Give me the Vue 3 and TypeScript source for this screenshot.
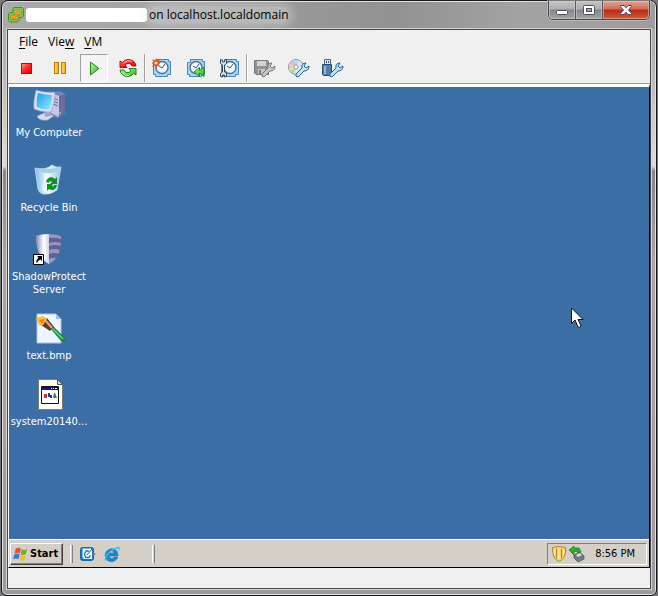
<script setup lang="ts">
import { ref } from 'vue'

interface MenuEntry {
  key: string
  rest: string
  before?: string
}

const menus: MenuEntry[] = [
  { key: 'F', rest: 'ile' },
  { before: 'Vie', key: 'w', rest: '' },
  { key: 'V', rest: 'M' },
]

const running = ref(true)
const clock = ref('8:56 PM')
</script>

<template>
  <div class="screen">
    <div class="window">
      <header class="titlebar">
        <svg class="app-icon" viewBox="0 0 16 16" aria-hidden="true">
          <path d="M6 .500h8l1.500 1.500v7L14 10.500h-3v3L9.500 15H2L.500 13.500V7L2 5.500h3V2z" fill="#8cc63f" stroke="#4c8a1a" />
          <path d="M7 3h6v5H9v4.500H3V8h4z" fill="#e4e8d4" stroke="#5e9821" stroke-width=".8" />
          <path d="M8.500 4H12v3.500H9v2H7.500V12H4V8.500h3v-2h1.500z" fill="#f7a21f" stroke="#c87a14" stroke-width=".6" />
        </svg>
        <span class="machine"></span>
        <span class="title">on localhost.localdomain</span>
        <div class="caption-buttons">
          <button type="button" class="cap min" aria-label="Minimize">
            <svg width="14" height="12" viewBox="0 0 14 12"><rect x="1.500" y="6.500" width="11" height="4" rx="1" fill="#fff" stroke="#4c4e60" /></svg>
          </button>
          <button type="button" class="cap max" aria-label="Maximize">
            <svg width="14" height="12" viewBox="0 0 14 12"><rect x="1.500" y="1.500" width="11" height="9" rx="1" fill="#fff" stroke="#4c4e60" /><rect x="4.500" y="4.500" width="5" height="3" fill="#a5a5aa" stroke="#4c4e60" /></svg>
          </button>
          <button type="button" class="cap close" aria-label="Close">
            <svg width="14" height="12" viewBox="0 0 14 12"><path d="M1.500 1.500h3.500l2 2.300 2-2.300h3.500v1L9.500 6l3 3.500v1H9l-2-2.300-2 2.300H1.500v-1l3-3.500-3-3.500z" fill="#fff" stroke="#53465c" /></svg>
          </button>
        </div>
      </header>

      <main class="client">
        <nav class="menubar">
          <button v-for="m in menus" :key="m.key" type="button" class="menu">{{ m.before }}<u>{{ m.key }}</u>{{ m.rest }}</button>
        </nav>

        <div class="toolbar" role="toolbar" aria-label="Virtual machine">
          <div class="group">
            <button type="button" class="tool" aria-label="Power off">
              <svg viewBox="0 0 20 20"><rect x="5.500" y="5.500" width="10" height="10" fill="url(#red)" stroke="#b50c0c" /></svg>
            </button>
            <button type="button" class="tool" aria-label="Suspend">
              <svg viewBox="0 0 20 20"><rect x="4.500" y="4.500" width="4" height="11" fill="url(#amber)" stroke="#bb7a00" /><rect x="11.500" y="4.500" width="4" height="11" fill="url(#amber)" stroke="#bb7a00" /></svg>
            </button>
            <button type="button" class="tool" :class="{ pressed: running }" aria-label="Power on">
              <svg viewBox="0 0 20 20"><path d="M6.500 4v13l8.500-6.500z" fill="url(#green)" stroke="#26841b" /></svg>
            </button>
            <button type="button" class="tool" aria-label="Reset">
              <svg viewBox="0 0 20 20">
                <path d="M18 8C17 1 8-.500 4.500 4.500L2 3v6.500h7L7 7c2-2.500 6-2 7 1z" fill="url(#red)" stroke="#a41212" />
                <path d="M2 12c1 7 10 8.500 13.500 3.500L18 17v-6.500h-7l2 2.500c-2 2.500-6 2-7-1z" fill="url(#green)" stroke="#247b1d" />
                <path d="M6 5q4-4 8-1" fill="none" stroke="#ffb3a8" /><path d="M4 14q2 4 7 3.500" fill="none" stroke="#c8f7b4" />
              </svg>
            </button>
          </div>
          <span class="separator"></span>
          <div class="group">
            <button type="button" class="tool" aria-label="Take snapshot">
              <svg viewBox="0 0 20 20">
                <use href="#clock" />
                <path d="M4 0l1 2.500L8 1 6.700 4 9 5 6.500 6 8 9 5 7.500 4 10 3 7.500 0 9l1.300-3L-.500 5l2-1L0 1l3 1.500z" fill="#e84b22" />
                <circle cx="4" cy="5" r="1.600" fill="#ffe38a" />
              </svg>
            </button>
            <button type="button" class="tool" aria-label="Revert to snapshot">
              <svg viewBox="0 0 20 20">
                <use href="#clock" />
                <path d="M13.500 9.500v3l4.500-3.500v9.500l-4.500-3.500v3.500L8 14z" fill="url(#green)" stroke="#23851a" />
              </svg>
            </button>
            <button type="button" class="tool" aria-label="Manage snapshots">
              <svg viewBox="0 0 20 20">
                <use href="#clock" />
                <path d="M.500 1.500v4L2.500 7v7L.500 15.500v3l2 .500v-2h2v2l2-.500v-3l-2-1.500V7l2-1.500v-4l-2 .500v2h-2V2z" fill="#d8e8f3" stroke="#33475b" />
              </svg>
            </button>
          </div>
          <span class="separator"></span>
          <div class="group">
            <button type="button" class="tool" aria-label="Floppy drive" disabled>
              <svg viewBox="0 0 20 20">
                <path d="M.500 2.500h13l1 1v13H2l-1.500-1.500z" fill="#929292" stroke="#777" />
                <path d="M3 3h9v5H3z" fill="#d2d2d2" /><path d="M4 11h7v5H4z" fill="#c7c7c7" /><path d="M5 12h2v4H5z" fill="#777" />
                <use href="#wrench" fill="#c5c5c5" stroke="#777" />
              </svg>
            </button>
            <button type="button" class="tool" aria-label="CD/DVD drive">
              <svg viewBox="0 0 20 20">
                <circle cx="8" cy="9" r="7.500" fill="#dce4ec" stroke="#8496a8" />
                <path d="M8 9L1 6q2-4 5-4z" fill="#d9b8e8" /><path d="M8 9L1 7v5z" fill="#f3d382" /><path d="M8 9L6 2h5z" fill="#a9dde9" /><path d="M8 9l-6 4 4 3z" fill="#a8dea0" />
                <circle cx="8" cy="9" r="2" fill="#fff" stroke="#8a9eb0" />
                <use href="#wrench" fill="#bde3f5" stroke="#285f8b" />
              </svg>
            </button>
            <button type="button" class="tool" aria-label="USB device">
              <svg viewBox="0 0 20 20">
                <path d="M2.500 1.500h6v5h-6z" fill="#dce6ef" stroke="#53677b" /><path d="M4 3h1v2H4zm2 0h1v2H6z" fill="#425670" />
                <path d="M.500 6.500h9v10l-1 1h-7l-1-1z" fill="#527ea8" stroke="#254b71" /><path d="M2 8h2v8H2z" fill="#92b9d6" />
                <use href="#wrench" fill="#bde3f5" stroke="#285f8b" />
              </svg>
            </button>
          </div>
        </div>

        <section class="console">
          <div class="desktop">
            <button type="button" class="shortcut">
              <svg viewBox="0 0 32 32">
                <path d="M18 3l9-2 5 3v20l-8 4-7-4z" fill="#8184b5" />
                <path d="M18 3l8 3v21l-8-4z" fill="#c4c5e7" /><path d="M26 6l6-2v20l-6 3z" fill="#6b6ca1" />
                <path d="M20 8l5 2m-5 1l5 2m-5 1l5 2" stroke="#696b9f" fill="none" /><circle cx="27" cy="23" r="1" fill="#61ee73" />
                <path d="M4 26l9-4 8 4-6 4c-5 1-10 0-11-4z" fill="#d9d9ef" stroke="#8589b5" stroke-width=".7" />
                <path d="M11 22l6-1 1 5-6 1z" fill="#a1a4cd" />
                <path d="M3 0q9 3 19 2 0 11-4 20-9 1-17-3Q0 12 3 0z" fill="#d6dff4" stroke="#7d94c5" stroke-width=".6" />
                <path d="M5 3q7 2 14 2 0 8-3 14.500-6 .500-12-2.500Q3 11 5 3z" fill="url(#screen)" />
              </svg>
              <span class="label">My Computer</span>
            </button>
            <button type="button" class="shortcut">
              <svg viewBox="0 0 32 32">
                <path d="M2 3q10 3 17-3 4 3 9 2l-4 23q-6 5-14 4-4-1-5-5z" fill="url(#bin)" stroke="#c3e2f5" stroke-width=".8" />
                <path d="M2 3q4 1 9 0 7 2 17-1-5 7-13 6Q7 8 2 3z" fill="#a8cfe9" /><path d="M11 9l4-1-1 18-5 1z" fill="#fff" opacity=".45" />
                <path d="M13 17c1-5 6-6 9-3l2-2v7h-7l2-2c-2-2-3 0-3 1zM24 20c-1 5-5 6-8 4l-2 2v-7h6l-1 2c1 1 2 0 2-1z" fill="#139022" />
              </svg>
              <span class="label">Recycle Bin</span>
            </button>
            <button type="button" class="shortcut">
              <svg viewBox="0 0 32 32">
                <path d="M3 2q13-4 25 0 1 22-12 28Q3 23 3 2z" fill="#9497c2" />
                <path d="M3 2q6-2 13-2v30Q3 23 3 2z" fill="url(#silver)" />
                <path d="M16 4q6-1 12 1v4q-6-2-12 0zm0 8q6-2 12 0l-1 4q-6-2-11 0zm0 8q5-2 10 0l-3 4q-3-1-7 1z" fill="#625f96" />
                <path d="M.500 20.500h10v10H.500z" fill="#fff" stroke="#000" />
                <path d="M4 22h5v5L7.500 25.500Q5 26 4 29 2 27 5.500 23.500z" fill="#000" />
              </svg>
              <span class="label">ShadowProtect Server</span>
            </button>
            <button type="button" class="shortcut">
              <svg viewBox="0 0 32 32">
                <path d="M4 1h19l5 5v24H4z" fill="#edf5ff" stroke="#a9c7ed" /><path d="M23 1v5h5z" fill="#9fbce6" />
                <path d="M17 15l3-2 13 13-1 3-4-1z" fill="#168744" /><path d="M19 15l11 11" stroke="#71d27e" stroke-width="1.500" />
                <path d="M10 8l4-3 7 9-4 4-9-6z" fill="#583c31" /><path d="M12 7l7 8" stroke="#f0a36e" stroke-width="2" />
                <path d="M3 5l7-2 4 3-4 6-3 1-2-3z" fill="#fac32e" /><path d="M6 7l6-1-3 5z" fill="#f17d22" />
              </svg>
              <span class="label">text.bmp</span>
            </button>
            <button type="button" class="shortcut">
              <svg viewBox="0 0 32 32">
                <path d="M5.500.500h19l5 5v25h-24z" fill="#fffef4" stroke="#777c7d" /><path d="M24.500.500v5h5z" fill="#d9d9d9" stroke="#55595b" />
                <path d="M8.500 7.500h17v17h-17z" fill="#fff" stroke="#111" /><path d="M9 8h16v3H9z" fill="#07178a" />
                <path d="M18 9.500h1m1 0h1m1 0h2" stroke="#fff" />
                <path d="M11 15h3v4h-3z" fill="#d22c2c" /><path d="M15 14h2v2h2v3h-2v-1h-2z" fill="#193db1" /><path d="M21 14h1l2 5h-4z" fill="#1b8c50" />
              </svg>
              <span class="label">system20140...</span>
            </button>
          </div>

          <footer class="taskbar">
            <button type="button" class="start">
              <svg viewBox="0 0 18 16" aria-hidden="true">
                <path d="M3 2q3-2 6 0L7.500 7.500q-3-2-6 0z" fill="#e75324" /><path d="M10 2.500q3 2 6 0L14.500 8q-3 2-6 0z" fill="#70ad32" />
                <path d="M1.500 8.500q3-2 6 0L6 14q-3-2-6 0z" fill="#3b77dc" /><path d="M8.500 9q3 2 6 0L13 14.500q-3 2-6 0z" fill="#f4bd22" />
              </svg>
              Start
            </button>
            <span class="grip"></span>
            <div class="quick">
              <button type="button" aria-label="Show Desktop">
                <svg viewBox="0 0 16 16"><rect x=".500" y="1.500" width="13" height="13" rx="2" fill="#1778c4" stroke="#1269ad" /><path d="M2.500 2.500H11l1 2v8.500H4L2.500 11z" fill="#f2fbff" /><path d="M9 5H6L4.500 8l1 3.500H9l1.500-2" fill="none" stroke="#1879be" stroke-width="1.300" /><path d="M7 9l5-6" stroke="#1c5c97" /><path d="M13 6l3 2-3 2z" fill="#e05527" /></svg>
              </button>
              <button type="button" aria-label="Internet Explorer">
                <svg viewBox="0 0 16 16"><path d="M14 10H5c1 3 4 3 5 1h4c-2 5-8 6-11 3-5-6 1-13 7-11 3 1 4 4 4 7zM5 7h5C9 4 6 4 5 7z" fill="#168ad4" stroke="#0870b8" stroke-width=".5" /><path d="M2 15c-4-1 2-11 11-14 4-1 3 2 1 5 1-3 0-4-3-3C5 6 0 14 3 13z" fill="#55baf0" /></svg>
              </button>
            </div>
            <span class="grip"></span>
            <div class="tray">
              <svg viewBox="0 0 16 16" role="img" aria-label="ShadowProtect"><path d="M1.500 1.500q6-2 13 0 1 11-6.500 14-7-3-6.500-14z" fill="#f6cf70" stroke="#bf841e" /><path d="M5.500 3v9M10.500 3v9" stroke="#b9801e" /><path d="M3.500 3v6M8 3v10M12.500 3v6" stroke="#fff0b4" /></svg>
              <svg viewBox="0 0 16 16" role="img" aria-label="Safely remove hardware"><path d="M5 9l6-3 4 4v3l-6 3-4-4z" fill="#737b87" stroke="#454c58" stroke-width=".7" /><path d="M7 9l4-2 2 2-4 2z" fill="#d8dee5" /><path d="M0 4l5-4v2h5l2 4-3 1-1-2-3 1v3z" fill="#2eac36" stroke="#16731e" stroke-width=".7" /></svg>
              <time>{{ clock }}</time>
            </div>
          </footer>

          <svg class="pointer" viewBox="0 0 12 21" aria-hidden="true">
            <path d="M.500 1v15.500L4 13l3 7q2 1 3-1l-3-6.500h5z" fill="#fff" stroke="#000" stroke-width=".9" />
          </svg>
        </section>
        <div class="status"></div>
      </main>
    </div>

    <svg class="defs" width="0" height="0" aria-hidden="true">
      <defs>
        <linearGradient id="red" x2="1" y2="1"><stop stop-color="#ff9a8c" /><stop offset=".5" stop-color="#f22" /><stop offset="1" stop-color="#d90000" /></linearGradient>
        <linearGradient id="amber" x2="1"><stop stop-color="#ffe36c" /><stop offset="1" stop-color="#ff9f00" /></linearGradient>
        <linearGradient id="green" x2="1" y2="1"><stop stop-color="#bdf5a2" /><stop offset="1" stop-color="#24b916" /></linearGradient>
        <linearGradient id="screen" x2="1" y2="1"><stop stop-color="#1b9dec" /><stop offset="1" stop-color="#95eaff" /></linearGradient>
        <linearGradient id="bin" x2="1"><stop stop-color="#80bce8" /><stop offset=".5" stop-color="#f3fbff" /><stop offset="1" stop-color="#91c5e8" /></linearGradient>
        <linearGradient id="silver" x2="1"><stop stop-color="#8788b5" /><stop offset=".6" stop-color="#fff" /><stop offset="1" stop-color="#d0d1e8" /></linearGradient>
        <g id="clock">
          <path d="M4.500 1.500h12v2h2v13h-3v2h-12v-2h-2v-12h3z" fill="#a6d3f0" stroke="#4388bf" />
          <circle cx="10" cy="9.500" r="6" fill="#edf7ff" stroke="#53718c" stroke-width="1.400" />
          <path d="M10 10l3-4m-3 4L7 8" stroke="#345875" fill="none" />
        </g>
        <path id="wrench" d="M8 16l6-6q-1-5 4-5l-2 3 2 2 3-2q0 5-5 5l-6 6q-3 0-2-3z" />
      </defs>
    </svg>
  </div>
</template>

<style>
body {
  margin: 0;
  background: #77777a;
}
</style>

<style scoped>
* {
  box-sizing: border-box;
}

button {
  padding: 0;
  border: 0;
  background: none;
  color: inherit;
  font: inherit;
}

svg {
  display: block;
  flex: none;
  overflow: visible;
}

.screen {
  display: flex;
  min-height: 100vh;
  padding: 0 1px;
}

.window {
  display: flex;
  flex: 1;
  flex-direction: column;
  padding: 0 5px 6px;
  border: 1px solid #17171b;
  border-radius: 7px 7px 6px 6px;
  background: linear-gradient(#a9a5a5 0, #b5b2b2 60px, #dedcdc 165px, #87858a 170px, #aaa5a6 260px, #9f9b9c 100%);
  box-shadow: inset 0 0 0 1px #e2e2e2;
}

.titlebar {
  display: flex;
  align-items: center;
  height: 27px;
  margin: 1px -4px 0;
  padding: 0 0 1px 5px;
  border-radius: 5px 5px 0 0;
  background: linear-gradient(90deg, #aaa 0, #aaa7a7 15%, #989898 45%, #929292 60%, #a3a3a3 80%, #9c9c9c 100%);
  font: 12px/16px "Open Sans", "Noto Sans", sans-serif;
  color: #000;
}

.app-icon {
  width: 16px;
  height: 16px;
}

.machine {
  width: 121px;
  height: 14px;
  margin: 0 2px;
  border-radius: 3px;
  background: #fff;
}

.title {
  border-radius: 8px;
  background: rgba(225, 225, 225, 0.4);
  box-shadow: 0 0 8px 4px rgba(225, 225, 225, 0.4);
  white-space: nowrap;
}

.caption-buttons {
  display: flex;
  align-self: flex-start;
  height: 19px;
  margin: -1px 5px 0 auto;
  border: 1px solid #47474c;
  border-top: 0;
  border-radius: 0 0 5px 5px;
  box-shadow: 0 0 0 1px #cfcfcf88;
}

.cap {
  display: flex;
  align-items: center;
  justify-content: center;
  width: 27px;
  border-right: 1px solid #56565c;
  background: linear-gradient(#c5c5c8 0, #adadb0 45%, #858589 50%, #a6a6aa 100%);
  box-shadow: inset 0 0 0 1px #d2d2d688;
}

.cap.min {
  border-radius: 0 0 0 4px;
}

.cap.close {
  width: 46px;
  border-right: 0;
  border-radius: 0 0 4px 0;
  background: linear-gradient(#dfa697 0, #cf6c53 45%, #b52d12 50%, #d7593a 100%);
}

.client {
  display: flex;
  flex: 1;
  flex-direction: column;
  border: 1px solid #45454a;
  outline: 1px solid #d5d5d5;
  background: #f0f0f0;
}

.menubar {
  display: flex;
  gap: 10px;
  height: 24px;
  padding-left: 11px;
  font: 12px/24px "Open Sans", "Noto Sans", sans-serif;
  color: #000;
}

.menu u {
  text-underline-offset: 2px;
}

.toolbar {
  display: flex;
  height: 30px;
  padding-left: 4px;
  border-bottom: 1px solid #9b9b9b;
}

.group {
  display: flex;
  gap: 6px;
}

.tool {
  display: flex;
  align-items: center;
  justify-content: center;
  width: 28px;
  height: 28px;
  border: 1px solid transparent;
}

.tool svg {
  width: 20px;
  height: 20px;
}

.tool.pressed {
  border-color: #a0a0a0 #fff #fff #a0a0a0;
  background: #f4f4f4;
}

.separator {
  width: 2px;
  height: 28px;
  margin: 0 2px;
  border-left: 1px solid #a0a0a0;
  border-right: 1px solid #fff;
}

.console {
  position: relative;
  display: flex;
  flex: 1;
  flex-direction: column;
  border-top: 3px solid #fcfcfc;
  border-left: 1px solid #fcfcfc;
  border-right: 1px solid #000;
  border-bottom: 1px solid #000;
}

.desktop {
  display: grid;
  flex: 1;
  grid-template-rows: 75px 69px 79px 66px;
  align-content: start;
  padding-top: 3px;
  background: #3b6ea5;
}

.shortcut {
  display: flex;
  flex-direction: column;
  align-items: center;
  gap: 4px;
  width: 80px;
  font: 11px/13px "DejaVu Sans Condensed", "DejaVu Sans", sans-serif;
  color: #fff;
}

.shortcut svg {
  width: 32px;
  height: 32px;
}

.taskbar {
  display: flex;
  align-items: center;
  height: 28px;
  padding: 1px 2px 1px 1px;
  border-top: 1px solid #fff;
  background: #d4d0c8;
  font: 11px/13px "DejaVu Sans Condensed", "DejaVu Sans", sans-serif;
  color: #000;
}

.start {
  display: flex;
  align-items: center;
  gap: 1px;
  width: 53px;
  height: 22px;
  padding-left: 2px;
  border: 1px solid;
  border-color: #fff #404040 #404040 #fff;
  box-shadow: inset -1px -1px #808080;
  font-weight: bold;
}

.start svg {
  width: 16px;
  height: 16px;
}

.grip {
  width: 3px;
  height: 18px;
  margin-left: 7px;
  border-left: 1px solid #fff;
  border-right: 1px solid #808080;
}

.quick {
  display: flex;
  gap: 8px;
  width: 72px;
  padding-left: 7px;
}

.quick svg,
.tray svg {
  width: 16px;
  height: 16px;
}

.tray {
  display: flex;
  align-items: center;
  gap: 2px;
  height: 22px;
  margin-left: auto;
  padding: 0 11px 0 3px;
  border: 1px solid;
  border-color: #808080 #fff #fff #808080;
}

.tray time {
  margin-left: 8px;
  white-space: nowrap;
}

.pointer {
  position: absolute;
  top: 220px;
  right: 66px;
  width: 12px;
  height: 21px;
}

.status {
  height: 20px;
}

.defs {
  position: absolute;
}
</style>
